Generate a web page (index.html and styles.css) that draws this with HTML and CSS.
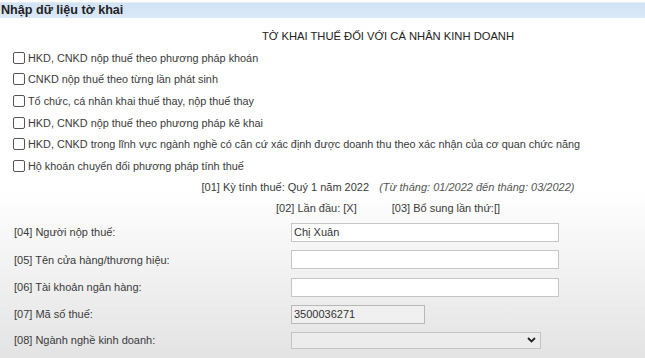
FILE: index.html
```html
<!DOCTYPE html>
<html lang="vi">
<head>
<meta charset="utf-8">
<link rel="stylesheet" href="styles.css">
</head>
<body>
<div class="page">
  <div class="header">Nhập dữ liệu tờ khai</div>
  <div class="form">
    <div class="title">TỜ KHAI THUẾ ĐỐI VỚI CÁ NHÂN KINH DOANH</div>
    <div class="checks">
      <label class="check"><span class="box"></span>HKD, CNKD nộp thuế theo phương pháp khoán</label>
      <label class="check"><span class="box"></span>CNKD nộp thuế theo từng lần phát sinh</label>
      <label class="check"><span class="box"></span>Tổ chức, cá nhân khai thuế thay, nộp thuế thay</label>
      <label class="check"><span class="box"></span>HKD, CNKD nộp thuế theo phương pháp kê khai</label>
      <label class="check"><span class="box"></span>HKD, CNKD trong lĩnh vực ngành nghề có căn cứ xác định được doanh thu theo xác nhận của cơ quan chức năng</label>
      <label class="check"><span class="box"></span>Hộ khoán chuyển đổi phương pháp tính thuế</label>
    </div>
    <div class="period">[01] Kỳ tính thuế: Quý 1 năm 2022 <span class="range">(Từ tháng: 01/2022 đến tháng: 03/2022)</span></div>
    <div class="times"><span>[02] Lần đầu: [X]</span><span>[03] Bổ sung lần thứ:[]</span></div>
    <div class="fields">
      <div class="row"><span class="lbl">[04] Người nộp thuế:</span><div class="inp wide">Chị Xuân</div></div>
      <div class="row"><span class="lbl">[05] Tên cửa hàng/thương hiệu:</span><div class="inp wide"></div></div>
      <div class="row"><span class="lbl">[06] Tài khoản ngân hàng:</span><div class="inp wide"></div></div>
      <div class="row"><span class="lbl">[07] Mã số thuế:</span><div class="inp short ro">3500036271</div></div>
      <div class="row last"><span class="lbl">[08] Ngành nghề kinh doanh:</span><div class="inp sel"><svg class="chev" width="9" height="6" viewBox="0 0 9 6"><path d="M1 1 L4.5 4.5 L8 1" fill="none" stroke="#222" stroke-width="1.8"/></svg></div></div>
    </div>
  </div>
</div>
</body>
</html>
```
FILE: styles.css
```css
html, body {
  margin: 0;
  padding: 0;
  overflow: hidden;
}
body {
  width: 645px;
  height: 358px;
  font-family: "Liberation Sans", Arial, sans-serif;
  color: #3a3a3a;
  background: linear-gradient(to bottom, #ffffff 0, #ffffff 190px, #e3e3e3 358px);
}
.page {
  width: 645px;
  height: 358px;
  overflow: hidden;
}
.header {
  margin-top: 2px;
  height: 15px;
  line-height: 15px;
  background: linear-gradient(to bottom, #d2e3f6, #dae8f8);
  border-top: 1px solid #e4ecf4;
  font-weight: bold;
  font-size: 12.6px;
  color: #222;
  padding-left: 1px;
}
.form {
  width: 776px;
}
.title {
  text-align: center;
  font-size: 11.2px;
  color: #222;
  margin-top: 11px;
  height: 14px;
  line-height: 14px;
}
.checks {
  display: flex;
  flex-direction: column;
  margin-top: 4px;
  padding-left: 13px;
}
.check {
  display: flex;
  align-items: center;
  height: 21.6px;
  font-size: 10.85px;
  color: #3a3a3a;
  white-space: nowrap;
}
.box {
  width: 10px;
  height: 10px;
  border: 1px solid #555;
  border-radius: 2px;
  background: #fff;
  margin-right: 3px;
  flex: none;
}
.period {
  text-align: center;
  font-size: 11px;
  margin-top: 0;
  height: 20px;
  line-height: 20px;
}
.range {
  font-style: italic;
  color: #555;
  margin-left: 7px;
}
.times {
  display: flex;
  justify-content: center;
  gap: 35px;
  font-size: 11px;
  height: 22px;
  line-height: 22px;
}
.fields {
  display: flex;
  flex-direction: column;
  padding-left: 14px;
  margin-top: 0;
}
.row {
  display: flex;
  align-items: center;
  height: 27.4px;
  font-size: 11px;
}
.row.last {
  height: 24px;
}
.lbl {
  width: 277px;
  flex: none;
}
.inp {
  box-sizing: border-box;
  height: 19px;
  border: 1px solid #c6c6c6;
  background: #fff;
  font-size: 11px;
  line-height: 17px;
  padding-left: 2px;
  color: #333;
}
.wide { width: 268px; }
.short { width: 134px; background: #f0f0f0; border-color: #b8b8b8; }
.sel {
  width: 250px;
  height: 17px;
  background: #ececec;
  border-color: #c4c4c4;
  display: flex;
  align-items: center;
  justify-content: flex-end;
  padding-right: 4px;
}
```
